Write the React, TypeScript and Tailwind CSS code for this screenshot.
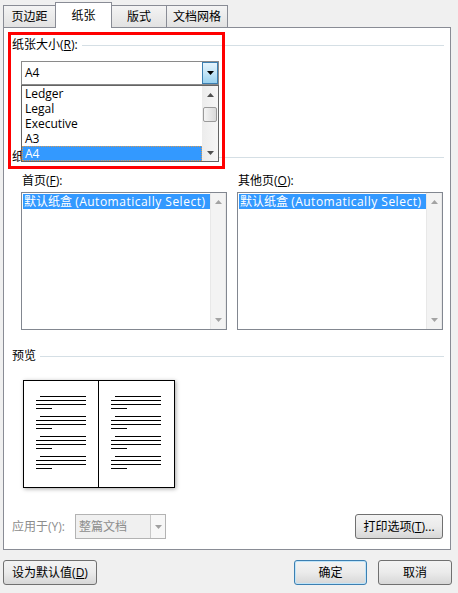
import React from "react";

const Tri = ({ up = false, color = "#000" }: { up?: boolean; color?: string }) => (
  <svg width="7" height="4" viewBox="0 0 7 4">
    <path d={up ? "M3.5 0 L7 4 L0 4 Z" : "M0 0 L7 0 L3.5 4 Z"} fill={color} />
  </svg>
);

const Section = ({ children, className = "" }: { children: React.ReactNode; className?: string }) => (
  <div className={`flex h-[16px] items-center ${className}`}>
    <span className="whitespace-nowrap">{children}</span>
    <div className="ml-[4px] h-px flex-1 bg-[#d5dfe5]" />
  </div>
);

const ListBox = () => (
  <div className="flex h-[138px] w-[206px] border border-[#828790] bg-white">
    <div className="flex-1 pt-px pl-px">
      <div className="h-[15px] whitespace-nowrap bg-[#3399ff] pl-px leading-[15px] text-white">
        默认纸盒 <span className="tracking-[0.5px]">(Automatically Select)</span>
      </div>
    </div>
    <div className="flex w-[16px] flex-col items-center justify-between border-x border-[#e8e8e8] bg-[#f3f3f3] py-[7px]">
      <Tri up color="#a3a3a3" />
      <Tri color="#a3a3a3" />
    </div>
  </div>
);

const Page = ({ last = false }: { last?: boolean }) => (
  <div className={`flex h-full w-[75px] flex-col gap-[7px] pt-[15px] pl-[12px] ${last ? "" : "border-r border-black"}`}>
    {[0, 1, 2, 3].map((g) => (
      <div key={g} className="flex flex-col gap-[3px]">
        <div className="ml-[4px] h-px w-[46px] bg-black" />
        <div className="h-px w-[50px] bg-black" />
        <div className="h-px w-[50px] bg-black" />
        <div className="h-px w-[16px] bg-black" />
      </div>
    ))}
  </div>
);

const Button = ({ children, className = "" }: { children: React.ReactNode; className?: string }) => (
  <div
    className={`flex h-[25px] items-center justify-center rounded-[3px] border bg-linear-to-b from-[#f3f3f3] via-[#ebebeb] to-[#d7d7d7] ${className}`}
  >
    {children}
  </div>
);

export default function App() {
  return (
    <div className="relative h-[593px] w-[458px] overflow-hidden bg-[#f0f0f0] font-['Open_Sans','Noto_Sans_CJK_SC',sans-serif] text-[12px] leading-[16px] text-black">
      {/* tabs */}
      <div className="relative z-10 flex h-[28px] items-end pl-[3px]">
        <div className="mb-px flex h-[22px] w-[52px] items-center justify-center border-t border-l border-[#898c95] bg-linear-to-b from-[#f4f4f4] to-[#e2e2e2]">
          页边距
        </div>
        <div className="flex h-[26px] w-[57px] items-center justify-center border-x border-t border-[#898c95] bg-white">
          纸张
        </div>
        <div className="mb-px flex h-[22px] w-[55px] items-center justify-center border-t border-r border-[#898c95] bg-linear-to-b from-[#f4f4f4] to-[#e2e2e2]">
          版式
        </div>
        <div className="mb-px flex h-[22px] w-[61px] items-center justify-center border-t border-r border-[#898c95] bg-linear-to-b from-[#f4f4f4] to-[#e2e2e2]">
          文档网格
        </div>
      </div>

      {/* panel */}
      <div className="relative -mt-px ml-[3px] h-[523px] w-[448px] border border-[#898c95] bg-white pr-[6px] pl-[8px]">
        <Section className="mt-[9px]">
          纸张大小(<span className="underline">R</span>):
        </Section>

        <div className="mt-[8px] ml-[9px] flex h-[24px] w-[198px] border border-[#8a8a8a] bg-white">
          <div className="flex flex-1 items-center pl-[3px]">A4</div>
          <div className="flex w-[16px] items-center justify-center border border-[#3c7fb1] bg-linear-to-b from-[#e5f4fc] via-[#c4e5f6] to-[#98d1ef]">
            <Tri />
          </div>
        </div>

        <Section className="mt-[64px]">纸张来源</Section>

        <div className="mt-[8px] ml-[9px] flex gap-[10px]">
          <div className="flex flex-col gap-[3px]">
            <div className="pl-px">
              首页(<span className="underline">F</span>):
            </div>
            <ListBox />
          </div>
          <div className="flex flex-col gap-[3px]">
            <div className="pl-px">
              其他页(<span className="underline">O</span>):
            </div>
            <ListBox />
          </div>
        </div>

        <Section className="mt-[18px]">预览</Section>

        <div className="mt-[16px] ml-[11px] flex h-[108px] w-[152px] border border-black bg-white shadow-[1px_1px_4px_rgba(0,0,0,0.35)]">
          <Page />
          <Page last />
        </div>

        <div className="mt-[26px] flex h-[25px] items-center">
          <span className="w-[63px] text-[#8d8d8d]">应用于(Y):</span>
          <div className="flex h-[25px] w-[91px] border border-[#b3b3b3] bg-[#f0f0f0]">
            <div className="flex flex-1 items-center pl-[3px] text-[#8d8d8d]">整篇文档</div>
            <div className="flex w-[15px] items-center justify-center border-l border-[#c8c8c8] bg-[#f7f7f7]">
              <Tri color="#a0a0a0" />
            </div>
          </div>
          <div className="flex-1" />
          <Button className="mr-px w-[88px] border-[#707070]">
            打印选项(<span className="underline">T</span>)...
          </Button>
        </div>

        {/* open dropdown list */}
        <div className="absolute top-[57px] left-[17px] z-10 flex h-[77px] w-[198px] border border-[#646464] bg-white">
          <div className="flex flex-1 flex-col">
            {["Ledger", "Legal", "Executive", "A3"].map((t) => (
              <div key={t} className="h-[15px] pl-[3px] leading-[15px]">
                {t}
              </div>
            ))}
            <div className="h-[15px] border border-dotted border-[#d69a55] bg-[#3399ff] pl-[2px] leading-[13px] text-white">
              A4
            </div>
          </div>
          <div className="flex w-[16px] flex-col bg-linear-to-r from-[#ececec] to-[#f6f6f6]">
            <div className="flex h-[17px] items-center justify-center">
              <Tri up color="#505050" />
            </div>
            <div className="mx-px mt-[4px] h-[15px] rounded-[2px] border border-[#9a9a9a] bg-linear-to-r from-[#f4f4f4] to-[#d9d9d9]" />
            <div className="flex-1" />
            <div className="flex h-[17px] items-center justify-center">
              <Tri color="#505050" />
            </div>
          </div>
        </div>
      </div>

      {/* bottom buttons */}
      <div className="mt-[10px] flex pr-[6px] pl-[3px]">
        <Button className="w-[94px] border-[#707070]">
          设为默认值(<span className="underline">D</span>)
        </Button>
        <div className="flex-1" />
        <Button className="w-[73px] border-[#3c7fb1] shadow-[inset_0_0_0_1px_#bfe4f9]">确定</Button>
        <Button className="ml-[11px] w-[74px] border-[#707070]">取消</Button>
      </div>

      {/* red annotation */}
      <div className="pointer-events-none absolute top-[32px] left-[8px] z-20 h-[137px] w-[217px] border-[3px] border-[#ff0000]" />
    </div>
  );
}
